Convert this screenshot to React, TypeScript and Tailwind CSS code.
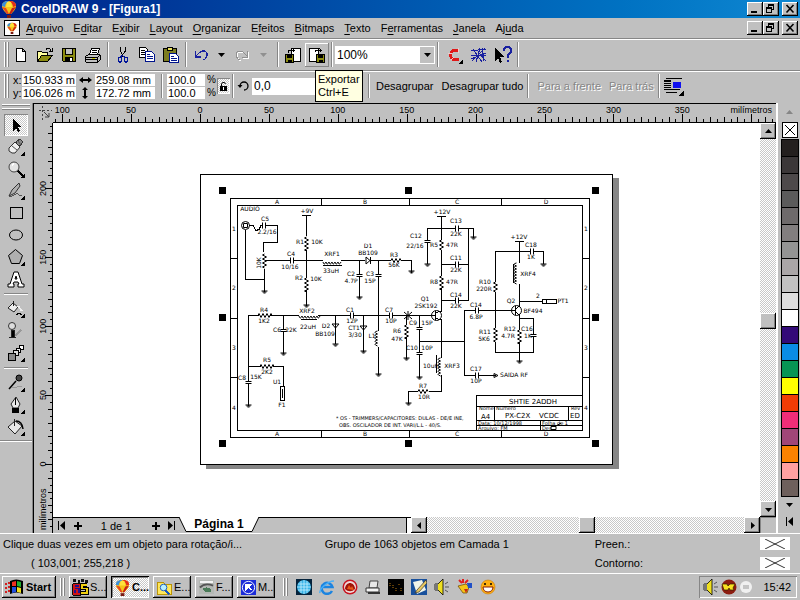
import type { ReactNode } from 'react';

const raised = 'bg-[#c0c0c0] shadow-[inset_-1px_-1px_#000,inset_1px_1px_#fff,inset_-2px_-2px_#808080]';
const dither = 'bg-[repeating-conic-gradient(#fff_0_25%,#c8c8c8_0_50%)] bg-[length:2px_2px]';

const menus = [
  ['', 'A', 'rquivo'],
  ['E', 'd', 'itar'],
  ['E', 'x', 'ibir'],
  ['', 'L', 'ayout'],
  ['', 'O', 'rganizar'],
  ['E', 'f', 'eitos'],
  ['', 'B', 'itmaps'],
  ['', 'T', 'exto'],
  ['F', 'e', 'rramentas'],
  ['', 'J', 'anela'],
  ['Aj', 'u', 'da'],
];

const palette = [
  'bg-[#231f1e]', 'bg-[#3b3738]', 'bg-[#4d494a]', 'bg-[#5b5b5b]', 'bg-[#6e6a6b]', 'bg-[#827e7f]', 'bg-[#949494]',
  'bg-[#aaa6a7]', 'bg-[#c2c2c2]', 'bg-[#dedede]', 'bg-white', 'bg-[#330a78]', 'bg-[#0a8ce6]', 'bg-[#069554]',
  'bg-[#ffff00]', 'bg-[#f03c05]', 'bg-[#f02d78]', 'bg-[#a04678]', 'bg-[#fa8200]', 'bg-[#ffa0a0]', 'bg-[#6e605c]',
];

function Icon({ children, size = 'size-[18px]' }: { children: ReactNode; size?: string }) {
  return (
    <svg viewBox="0 0 18 18" className={`${size} shrink-0`} fill="none" stroke="#000" shapeRendering="crispEdges" aria-hidden="true">
      {children}
    </svg>
  );
}

function Tri({ dir }: { dir: 'up' | 'down' | 'left' | 'right' }) {
  const d = {
    up: 'M1 6h7L4.500 2z',
    down: 'M1 3h7L4.500 7z',
    left: 'M6 1v7L2 4.500z',
    right: 'M3 1v7l4-3.500z',
  }[dir];
  return (
    <svg viewBox="0 0 9 9" className="size-[9px]" aria-hidden="true">
      <path d={d} fill="currentColor" />
    </svg>
  );
}

function Balloon({ size = 'size-[18px]' }: { size?: string }) {
  return (
    <svg viewBox="0 0 18 18" className={`${size} shrink-0`} aria-hidden="true">
      <path d="M9 1C4 1 2 3 2 6c0 3 3 6 5 8h4c2-2 5-5 5-8 0-3-2-5-7-5z" fill="#f5c518" />
      <path d="M9 1C4 1 2 3 2 6l3 1c0-3 2-5 4-6z" fill="#3a8fdc" />
      <path d="M9 1c5 0 7 2 7 5l-3 1c0-3-2-5-4-6z" fill="#e22b1c" />
      <path d="M7 2h4l1 5H6z" fill="#ffe23c" />
      <path d="M2 7l5 7h2L6 8z" fill="#e8461c" />
      <path d="M16 7l-5 7H9l3-6z" fill="#c81f14" />
      <path d="M7 15h4v3H7z" fill="#7a1a12" />
    </svg>
  );
}

function WindowButtons() {
  const base = `h-[14px] w-4 flex items-center justify-center ${raised}`;
  return (
    <div className="ml-auto flex pr-0.5">
      <button aria-label="Minimizar" className={base}>
        <svg viewBox="0 0 16 14" className="h-[14px] w-4" aria-hidden="true"><path d="M4 9h6v2H4z" /></svg>
      </button>
      <button aria-label="Restaurar" className={base}>
        <svg viewBox="0 0 16 14" className="h-[14px] w-4" fill="none" stroke="#000" shapeRendering="crispEdges" aria-hidden="true">
          <path d="M5.500 5V2.500h5v5H9M5 3.500h6M3.500 5.500h5v5h-5zM3 6.500h6" />
        </svg>
      </button>
      <button aria-label="Fechar" className={`${base} ml-[3px]`}>
        <svg viewBox="0 0 16 14" className="h-[14px] w-4" fill="none" stroke="#000" strokeWidth="1.600" aria-hidden="true">
          <path d="M4.500 3l7 7.500M11.500 3l-7 7.500" />
        </svg>
      </button>
    </div>
  );
}

function Grip({ className = 'px-1' }: { className?: string }) {
  return (
    <div className={`flex gap-px self-stretch py-0.5 ${className}`}>
      <div className="w-0.5 border-l border-white border-r border-r-[#868686]" />
      <div className="w-0.5 border-l border-white border-r border-r-[#868686]" />
    </div>
  );
}

function Sep() {
  return (
    <div className="flex w-1.5 shrink-0 justify-center self-stretch py-0.5">
      <div className="w-0.5 border-l border-[#868686] border-r border-r-white" />
    </div>
  );
}

function Tool({ label, children, className = 'w-6' }: { label: string; children: ReactNode; className?: string }) {
  return (
    <button aria-label={label} className={`flex h-6 shrink-0 items-center justify-center ${className}`}>
      {children}
    </button>
  );
}

function StandardBar() {
  return (
    <div className="flex h-8 items-center border-b border-[#868686] border-t border-t-white pb-px">
      <Grip className="pl-1" />
      <Tool label="Novo">
        <Icon><path d="M4.500 2.500h6l3 3v10h-9zM10.500 2.500v3h3" fill="#fff" /></Icon>
      </Tool>
      <Tool label="Abrir">
        <Icon>
          <path d="M1.500 15.500v-10h4l1 1h5v3" fill="#ffff9c" />
          <path d="M1.500 15.500l4-6h11l-5 6z" fill="#8c8c10" />
          <path d="M10 3.500c2-2 4-1 5 1M16.500 2v3.500H13" />
        </Icon>
      </Tool>
      <Tool label="Salvar">
        <Icon>
          <path d="M2.500 2.500h13v13h-12l-1-1z" fill="#8c8c10" />
          <path d="M5.500 2.500h7v6h-7z" fill="#c0c0c0" />
          <path d="M5 11h8v5H5z" fill="#000" stroke="none" />
          <path d="M10 12h2v3h-2z" fill="#fff" stroke="none" />
        </Icon>
      </Tool>
      <Tool label="Imprimir">
        <Icon>
          <path d="M5.500 8.500l2-6h8l-2 6z" fill="#fff" />
          <path d="M8 4.500h5M7.500 6.500h5" />
          <path d="M1.500 10.500l3-2h11l1 1v4l-3 3h-11l-1-1z" fill="#c0c0c0" />
          <path d="M2 11.500h11l3-2M13.500 11v5M2 13.500h11" />
          <path d="M8 12.500h3" stroke="#cc0" />
        </Icon>
      </Tool>
      <Sep />
      <Tool label="Recortar">
        <Icon>
          <path d="M6.500 1v4l2 4M11.500 1v4l-3 4v2" />
          <path d="M8.500 9l-2 2M9 10l2 1M4.500 12v3l1 1h1l1-1v-3l-1-1h-1zM10.500 12v3l1 1h1l1-1v-3l-1-1h-1z" stroke="#00149a" />
        </Icon>
      </Tool>
      <Tool label="Copiar">
        <Icon>
          <path d="M1.500 1.500h6l2 2v8h-8z" fill="#fff" />
          <path d="M3 4.500h4M3 6.500h5M3 8.500h4" />
          <path d="M7.500 5.500h6l3 3v7h-9z" fill="#fff" stroke="#00148c" />
          <path d="M9 8.500h3M9 10.500h6M9 12.500h6" stroke="#00148c" />
        </Icon>
      </Tool>
      <Tool label="Colar">
        <Icon>
          <path d="M1.500 2.500h13v13h-13z" fill="#7c7c20" />
          <path d="M5.500 1.500h5v3h-5z" fill="#e8e060" />
          <path d="M7.500 7.500h6l3 3v6h-9z" fill="#fff" stroke="#00148c" />
          <path d="M9 10.500h3M9 12.500h6M9 14.500h6" stroke="#00148c" />
        </Icon>
      </Tool>
      <Sep />
      <Tool label="Desfazer">
        <Icon>
          <path d="M3.500 5v6H9M4 10l4-4 3-1h2l2 2v3l-2 3-2 1" stroke="#1820a0" strokeWidth="1.300" />
        </Icon>
      </Tool>
      <Tool label="Lista de desfazer" className="w-4"><Tri dir="down" /></Tool>
      <Tool label="Refazer" className="w-[26px]">
        <Icon>
          <path d="M14.500 5v6H9M14 10l-4-4-3-1H5L3 7v3l2 3 2 1" stroke="#fff" transform="translate(1 1)" />
          <path d="M14.500 5v6H9M14 10l-4-4-3-1H5L3 7v3l2 3 2 1" stroke="#909090" />
        </Icon>
      </Tool>
      <Tool label="Lista de refazer" className="w-4 text-[#909090]"><Tri dir="down" /></Tool>
      <div className="w-1" />
      <Sep />
      <Tool label="Importar">
        <Icon>
          <path d="M7.500 2.500h9v13h-9z" fill="#fff" />
          <path d="M1.500 8.500h8v8h-8z" fill="#8c8c10" />
          <path d="M3 9h5v3H3zM4 14h4v3H4z" fill="#000" stroke="none" />
          <path d="M4.500 7V4.500h6M8.500 2.500l2 2-2 2" />
        </Icon>
      </Tool>
      <Tool label="Exportar" className="w-6 shadow-[inset_-1px_-1px_#868686,inset_1px_1px_#fff]">
        <Icon>
          <path d="M1.500 2.500h9v13h-9z" fill="#fff" />
          <path d="M8.500 8.500h8v8h-8z" fill="#8c8c10" />
          <path d="M10 9h5v3h-5zM11 14h4v3h-4z" fill="#000" stroke="none" />
          <path d="M7.500 6V4.500h6M11.500 2.500l2 2-2 2" />
        </Icon>
      </Tool>
      <Sep />
      <div className="relative h-[18px] w-[100px] shrink-0">
        <select aria-label="Níveis de zoom" className="block h-[18px] w-full appearance-none bg-white py-0 pl-0.5 text-[12px] leading-4 outline-none">
          <option>100%</option>
        </select>
        <div className="pointer-events-none absolute top-px right-px flex h-4 w-[14px] items-center justify-center bg-[#c0c0c0]">
          <Tri dir="down" />
        </div>
      </div>
      <Sep />
      <Tool label="Corel Online" className="w-[26px]">
        <Icon>
          <path d="M14 5l-3-1-4 1-2 4 2 4 4 1 3-1" stroke="#e01818" strokeWidth="3" />
          <path d="M13 2v5M3 7h4M6 14l3-3" stroke="#f4c8c8" />
          <path d="M18 13v5h-5z" fill="#000" stroke="none" />
        </Icon>
      </Tool>
      <Tool label="Gráficos">
        <Icon>
          <path d="M1 5l15-2M1 9l15 1M2 15L15 2M3 3l9 13M10 2L6 16M1 13l15-6M8 6l8 9M12 2l2 13" stroke="#1820a0" />
        </Icon>
      </Tool>
      <Tool label="O que é isto?">
        <Icon>
          <path d="M1 2v13l3-3 2 5 2-1-2-5h4z" fill="#000" stroke="none" />
          <path d="M10 5V3l2-2h3l2 2v3l-3 3v3M13 15h2" stroke="#1820a0" strokeWidth="1.700" />
        </Icon>
      </Tool>
      <Sep />
    </div>
  );
}

function Field({ label, value }: { label: string; value: string }) {
  return <input aria-label={label} defaultValue={value} className="h-3 w-full bg-white px-px text-[11px] leading-3 outline-none" />;
}

function PropertyBar() {
  return (
    <div className="flex h-[30px] shrink-0 items-center border-t border-white pb-px">
      <Grip />
      <div className="grid grid-cols-[9px_54px_19px_60px] gap-y-px text-[11px] leading-3">
        <span>x:</span>
        <Field label="Posição x" value="150.933 m" />
        <svg viewBox="0 0 19 12" className="h-3 w-[19px]" aria-hidden="true"><path d="M3 6l4-3v2h5V3l4 3-4 3V7H7v2z" /></svg>
        <Field label="Largura" value="259.08 mm" />
        <span>y:</span>
        <Field label="Posição y" value="106.026 m" />
        <svg viewBox="0 0 19 12" className="h-3 w-[19px]" aria-hidden="true"><path d="M9 0l3 3h-2v6h2l-3 3-3-3h2V3H6z" /></svg>
        <Field label="Altura" value="172.72 mm" />
      </div>
      <div className="w-1" />
      <Sep />
      <div className="ml-0.5 grid grid-cols-[38px_12px] gap-y-px text-[10px] leading-3">
        <Field label="Escala horizontal" value="100.0" />
        <span className="pl-0.5">%</span>
        <Field label="Escala vertical" value="100.0" />
        <span className="pl-0.5">%</span>
      </div>
      <button aria-label="Proporção fixa" className={`flex h-4 w-[13px] items-center justify-center shadow-[inset_1px_1px_#868686,inset_-1px_-1px_#fff] ${dither}`}>
        <svg viewBox="0 0 9 11" className="h-[11px] w-[9px]" fill="none" stroke="#000" aria-hidden="true">
          <path d="M2.500 5V3l1-1.500h2L6.500 3" />
          <path d="M1 5h7v5H1z" fill="#000" stroke="none" />
          <path d="M4 6h1v3H4z" fill="#fff" stroke="none" />
        </svg>
      </button>
      <Sep />
      <svg viewBox="0 0 16 16" className="size-4" fill="none" stroke="#000" strokeWidth="1.300" aria-hidden="true">
        <path d="M4 8a4 4 0 1 1 4 4" />
        <path d="M1.500 7h5L4 10z" fill="#000" stroke="none" />
      </svg>
      <input aria-label="Ângulo de rotação" defaultValue="0,0" className="h-[17px] w-[107px] bg-white px-0.5 text-[12px] outline-none" />
      <div className="w-[7px]" />
      <Sep />
      <button className="ml-1 whitespace-nowrap text-[11px]">Desagrupar</button>
      <button className="ml-2 whitespace-nowrap text-[11px]">Desagrupar tudo</button>
      <div className="w-0.5" />
      <Sep />
      <button disabled className="ml-1.5 whitespace-nowrap text-[11px] text-[#868686] [text-shadow:1px_1px_#fff]">Para a frente</button>
      <button disabled className="ml-2 whitespace-nowrap text-[11px] text-[#868686] [text-shadow:1px_1px_#fff]">Para trás</button>
      <div className="ml-0.5" />
      <Sep />
      <button aria-label="Quebra de texto" className="ml-0.5">
        <Icon size="size-5">
          <path d="M2 2.500h14M0 4.500h6M0 6.500h6M0 8.500h6M0 10.500h6M0 12.500h14M2 14.500h10" />
          <path d="M8 5h7v6H8z" fill="#1010f0" stroke="none" />
          <path d="M18 13v5h-5z" fill="#000" stroke="none" />
        </Icon>
      </button>
    </div>
  );
}

function ToolButton({ label, flyout, pressed, children }: { label: string; flyout?: boolean; pressed?: boolean; children: ReactNode }) {
  return (
    <button
      aria-label={label}
      className={`flex h-[22px] w-6 items-center justify-center ${pressed ? `shadow-[inset_1px_1px_#868686,inset_-1px_-1px_#fff] ${dither}` : ''}`}
    >
      <Icon>
        {children}
        {flyout && <path d="M18 13v5h-5z" fill="#000" stroke="none" />}
      </Icon>
    </button>
  );
}

function Toolbox() {
  return (
    <div className="w-[33px] shrink-0 border-r border-[#868686] pt-px">
      <div className="mx-0.5 mb-1 flex flex-col gap-0.5">
        <div className="h-0.5 border-t border-white border-b border-b-[#868686]" />
        <div className="h-0.5 border-t border-white border-b border-b-[#868686]" />
      </div>
      <div className="flex flex-col items-start pl-1">
        <ToolButton label="Seleção" pressed>
          <path d="M6 3v12l3-3 2 4 2-1-2-4h4z" fill="#000" stroke="none" />
        </ToolButton>
        <ToolButton label="Forma" flyout>
          <path d="M9 4l4-3 3 3-5 6z" fill="#888" stroke="#333" />
          <path d="M8 4L2 10v3l3 2h3l5-6z" fill="#f0f0f0" stroke="#333" shapeRendering="auto" />
          <path d="M11 3l3 4M5 8l5 4" stroke="#555" shapeRendering="auto" />
        </ToolButton>
        <ToolButton label="Zoom" flyout>
          <circle cx="7" cy="7" r="5" fill="#e4e4e4" stroke="#444" shapeRendering="auto" />
          <path d="M5 5l2-1" stroke="#fff" strokeWidth="2" />
          <path d="M11 11l5 5" strokeWidth="2.500" />
        </ToolButton>
        <ToolButton label="Mão livre" flyout>
          <path d="M12 1L5 8l-3 6 6-3 5-7z" fill="#b0b0b0" stroke="#333" shapeRendering="auto" />
          <path d="M2 14c4 2 7-4 9-2s3 2 4 2" stroke="#555" />
        </ToolButton>
        <ToolButton label="Retângulo"><path d="M3.500 3.500h12v11h-12z" /></ToolButton>
        <ToolButton label="Elipse"><ellipse cx="9" cy="9" rx="6.500" ry="5" shapeRendering="auto" /></ToolButton>
        <ToolButton label="Polígono" flyout><path d="M8.500 1.500l7 6-3 8h-8l-3-8z" fill="#b0b0b0" shapeRendering="auto" /></ToolButton>
        <ToolButton label="Texto">
          <path d="M7 2h4l4 12h2v3h-6v-3h1l-1-2H7l-1 2h1v3H1v-3h2zM8 9h2L9 6z" fill="#fff" shapeRendering="auto" />
        </ToolButton>
        <div className="my-[3px] h-0.5 w-6 border-t border-[#868686] border-b border-b-white" />
        <ToolButton label="Preenchimento interativo" flyout>
          <path d="M6 3l5 4-4 5-6-4z" fill="#eee" stroke="#222" shapeRendering="auto" />
          <path d="M6 1v5" stroke="#222" />
          <path d="M11 6l4 5" stroke="#eee" strokeWidth="2" />
          <path d="M9 15l3-2 3 2" />
        </ToolButton>
        <ToolButton label="Transparência interativa">
          <circle cx="5" cy="4" r="3.500" fill="#ddd" stroke="#333" shapeRendering="auto" />
          <path d="M4 8h3v7H4zM2 15.500h7" fill="#000" stroke="#222" />
          <path d="M8 14l6-6" stroke="#999" strokeWidth="2" />
        </ToolButton>
        <ToolButton label="Mistura interativa" flyout>
          <path d="M12.500 1.500h4v4h-4z" fill="#fff" />
          <path d="M9.500 4.500h4v4h-4z" fill="#eee" />
          <path d="M6.500 6.500h5v5h-5z" fill="#ddd" />
          <path d="M1.500 9.500h7v7h-7z" fill="#888" />
        </ToolButton>
        <div className="my-[3px] h-0.5 w-6 border-t border-[#868686] border-b border-b-white" />
        <ToolButton label="Conta-gotas" flyout>
          <path d="M5 14l10-2" stroke="#999" />
          <circle cx="12" cy="4" r="3" fill="#444" shapeRendering="auto" />
          <path d="M9 7l-7 8" strokeWidth="1.500" shapeRendering="auto" />
        </ToolButton>
        <ToolButton label="Contorno" flyout>
          <path d="M9 1l4 7-2 4H6L4 8z" fill="#e8e8e8" stroke="#222" shapeRendering="auto" />
          <path d="M8.500 2v7" />
          <path d="M5 12h7v5H5z" fill="#000" stroke="none" />
        </ToolButton>
        <ToolButton label="Preenchimento" flyout>
          <path d="M8 3l7 5-7 8-7-7z" fill="#e8e8e8" stroke="#222" shapeRendering="auto" />
          <path d="M7.500 1v7" stroke="#222" />
          <path d="M9 3q6 0 7 8" strokeWidth="1.500" shapeRendering="auto" />
        </ToolButton>
      </div>
      <div className="mt-0.5 h-0.5 border-t border-[#868686] border-b border-b-white" />
    </div>
  );
}

// 50 mm on the rulers spans just under 69 pixels
const MM = 1.378;
const tickLength = (mm: number) => (mm % 50 === 0 ? 8 : mm % 10 === 0 ? 5 : 3);
const range = (from: number, to: number, step: number) =>
  Array.from({ length: Math.floor((to - from) / step) + 1 }, (_, i) => from + i * step);

function HorizontalRuler() {
  return (
    <div className="h-[19px] min-w-0 flex-1 overflow-hidden border-b border-black">
      <svg className="h-[18px] w-full font-['Liberation_Sans',Arial,sans-serif] text-[9px]" shapeRendering="crispEdges" aria-hidden="true">
        {range(-105, 415, 5).map((mm) => {
          const x = Math.round(147 + mm * MM) + 0.5;
          return <path key={mm} d={`M${x} 18v-${tickLength(mm)}`} stroke="#000" />;
        })}
        {range(-100, 350, 50).map((mm) => (
          <text key={mm} x={147 + mm * MM} y="9" textAnchor="middle">{Math.abs(mm)}</text>
        ))}
        <text x="719" y="9" textAnchor="end">milímetros</text>
      </svg>
    </div>
  );
}

function VerticalRuler() {
  return (
    <div className="w-[17px] shrink-0 overflow-hidden border-r border-black">
      <svg className="h-full w-4 font-['Liberation_Sans',Arial,sans-serif] text-[9px]" shapeRendering="crispEdges" aria-hidden="true">
        {range(-45, 245, 5).map((mm) => {
          const y = Math.round(341 - mm * MM) + 0.5;
          return <path key={mm} d={`M16 ${y}h-${tickLength(mm) - 1}`} stroke="#000" />;
        })}
        {range(0, 200, 50).map((mm) => (
          <text key={mm} textAnchor="middle" transform={`translate(10 ${341 - mm * MM}) rotate(-90)`}>{mm}</text>
        ))}
        <text textAnchor="start" transform="translate(10 407) rotate(-90)">milímetros</text>
      </svg>
    </div>
  );
}

const zigH = (x: number, y: number, n = 5) => `M${x} ${y}l1 -2` + 'l2 4l2 -4'.repeat(Math.ceil(n / 2)) + 'l1 2';
const zigV = (x: number, y: number, n = 5) => `M${x} ${y}l-2 1` + 'l4 2l-4 2'.repeat(Math.ceil(n / 2)) + 'l2 1';
const capH = (x: number, y: number) => `M${x} ${y - 3}v6M${x + 3} ${y - 3}v6`;
const capV = (x: number, y: number) => `M${x - 3} ${y}h6M${x - 3} ${y + 2}h6`;
const ground = (x: number, y: number) => `M${x - 3} ${y}h6M${x - 2} ${y + 1}h4M${x - 1} ${y + 2}h2`;
const coilH = (x: number, y: number, n: number) => `M${x} ${y}` + 'q1 4 3 0'.repeat(n);
const coilV = (x: number, y: number, n: number) => `M${x} ${y}` + 'q-5 1 0 3'.repeat(n);

const wires = [
  'M230.500 198.500h359v239h-359zM237.500 205.500h345v225h-345z',
  'M321.500 198v7M409.500 198v7M501.500 198v7M321.500 430v7M409.500 430v7M501.500 430v7',
  'M230 258.500h7M230 318.500h7M230 377.500h7M582 258.500h7M582 318.500h7M582 377.500h7',
  // audio input
  'M249 225.500h4l3 5 3-1 2-4h2M265 225.500h12.500v16.500h-14v10M264.500 269v23M245.500 230v49.500h18M266 260.500h24M294 260.500h29',
  'M302 215.500h9M306.500 215v21M306.500 250v28M306.500 290v16M341 260.500h24M371 260.500h20M401 260.500h10v12',
  'M359.500 260v14M359.500 277v21M378.500 260v14M378.500 277v54M378.500 347v28',
  // oscillator row
  'M248.500 381v-65.500h10M270 315.500h29M318 315.500h32M353 315.500h37M393 315.500h39',
  'M248.500 383v23M248.500 366.500h12M273 366.500h10v20M280.500 386.500h4v14h-4zM282.500 389v9',
  'M283.500 315v14M283.500 332v22M335.500 315v29M363.500 315v37M406.500 315v10M406.500 337v22',
  'M419.500 315v12M419.500 330v22M419.500 355v23M419.500 341.500h45',
  // driver stage
  'M437 216.500h9M441.500 216v24M441.500 250v26M441.500 288v24M441.500 319v39M441.500 375v16.500h-13M418 391.500h-9.500V404',
  'M427.500 240v-11.500h28M459 228.500h14.500V238M427.500 243v21M441.500 264.500h14M459 264.500h9.500M441.500 300.500h14M459 300.500h9.500M468.500 228v72',
  'M435 311v9M432 315.500h3M435 313l6-2M435 318l6 2',
  // output stage
  'M464.500 310v65.500h11M464 310.500h11M479 310.500h36M479 375.500h17M495.500 282v-30.500h35M534 251.500h9.500V264M495.500 292v36M495.500 342v10.500h38V337M533.500 334v-15.500h-14',
  'M515 241.500h9M519.500 241v22M519.500 284v22M519.500 314v16M519.500 342v20M519 301.500h23M542.500 299.500h14v4h-14zM546 300v3M515.500 306v9M515 309l5-3M515 312l5 3',
  // title block
  'M476.500 430v-34.500h106M476.500 406.500h106M476.500 420.500h106M476.500 425.500h106M494.500 406v14M568.500 406v14M540.500 420v10',
];

const parts = [
  zigV(264.5, 254, 5), zigV(306.5, 237, 5), zigV(306.5, 278, 5), zigH(391, 260.5, 4), zigH(258, 315.5, 5), zigH(260, 366.5, 5),
  zigV(406.5, 325, 5), zigV(441.5, 240, 4), zigV(441.5, 276, 5), zigH(418, 391.5, 4), zigV(495.5, 282, 4), zigV(495.5, 328, 5), zigV(519.5, 330, 5),
  capH(262.5, 225.5), capH(290.5, 260.5), capV(359.5, 274.5), capV(378.5, 274.5), capV(283.5, 329.5), capH(350.5, 315.5), capH(389.5, 315.5),
  capV(248.5, 381.5), capV(419.5, 327.5), capV(419.5, 352.5), capV(427.5, 240.5), capH(455.5, 228.5), capH(455.5, 264.5), capH(455.5, 300.5),
  capH(475.5, 310.5), capH(475.5, 375.5), capH(530.5, 251.5), capV(533.5, 334.5),
  ground(264.5, 291), ground(306.5, 305), ground(359.5, 297), ground(378.5, 374), ground(248.5, 405), ground(283.5, 353), ground(335.5, 344),
  ground(363.5, 351), ground(406.5, 358), ground(419.5, 377), ground(408.5, 403), ground(411.5, 271), ground(427.5, 264), ground(473.5, 237),
  ground(543.5, 264), ground(519.5, 361),
  coilH(323, 262, 6), coilH(299, 316, 7), coilV(377.5, 331, 5), coilV(440.5, 358, 6), coilV(516.5, 263, 7),
  'M323 265.500h19M301 319.500h16M436.500 355v18M513.500 264v19', 'M366 257v7l4-3.500zM370.500 257v7', 'M332 324h7l-3.500 4zM360 326h7l-3.500 4z', 'M404 312l8 7M404 319l8-7M403 315.500h9M408 311v9',
];

const labels: [number, number, string][] = [
  [277, 204, 'A'], [365, 204, 'B'], [457, 204, 'C'], [546, 204, 'D'], [277, 436, 'A'], [365, 436, 'B'], [457, 436, 'C'], [546, 436, 'D'],
  [234, 231, '1'], [234, 290, '2'], [234, 350, '3'], [234, 410, '4'], [586, 231, '1'], [586, 290, '2'], [586, 350, '3'], [586, 410, '4'],
  [250, 211, 'AUDIO'], [265, 221, 'C5'], [267, 234, '2.2/16'], [307, 213, '+9V'], [300, 244, 'R1'], [317, 244, '10K'], [291, 256, 'C4'], [290, 269, '10/16'],
  [299, 280, 'R2'], [316, 281, '10K'], [332, 256, 'XRF1'], [331, 273, '33uH'], [368, 248, 'D1'], [368, 255, 'BB109'], [394, 257, 'R3'], [394, 267, '56K'],
  [351, 276, 'C2'], [351, 283, '4.7P'], [370, 276, 'C3'], [370, 283, '15P'], [264, 312, 'R4'], [264, 323, '1K2'], [307, 313, 'XRF2'], [308, 329, '22uH'],
  [326, 328, 'D2'], [325, 336, 'BB109'], [350, 312, 'C1'], [352, 323, '12P'], [354, 330, 'CT1'], [355, 337, '3/30'], [389, 312, 'C7'], [391, 323, '10P'],
  [277, 332, 'C6'], [291, 332, '22K'], [372, 338, 'L1'], [397, 333, 'R6'], [397, 341, '47K'], [267, 362, 'R5'], [267, 374, '2K2'], [242, 380, 'C8'],
  [256, 379, '15K'], [277, 384, 'U1'], [282, 407, 'F1'], [413, 325, 'C9'], [427, 325, '15P'], [412, 350, 'C10'], [427, 350, '10P'], [431, 368, '10uH'],
  [452, 368, 'XRF3'], [423, 388, 'R7'], [424, 399, '10R'], [442, 214, '+12V'], [416, 238, 'C12'], [415, 248, '22/16'], [434, 247, 'R5'], [452, 247, '47R'],
  [456, 223, 'C13'], [456, 236, '22K'], [456, 260, 'C11'], [456, 272, '22K'], [434, 284, 'R8'], [452, 284, '47R'], [456, 297, 'C14'], [456, 308, '22K'],
  [425, 301, 'Q1'], [426, 308, '2SK192'], [476, 307, 'C14'], [476, 319, '6.8P'], [476, 371, 'C17'], [476, 383, '10P'], [514, 377, 'SAIDA RF'],
  [485, 284, 'R10'], [484, 291, '220R'], [485, 334, 'R11'], [484, 341, '5K6'], [510, 331, 'R12'], [508, 338, '4.7R'], [527, 331, 'C16'], [528, 338, '1K'],
  [519, 239, '+12V'], [531, 247, 'C18'], [531, 259, '1K'], [528, 276, 'XRF4'], [511, 303, 'Q2'], [533, 313, 'BF494'], [538, 298, '2'], [563, 303, 'PT1'],
];

const smallPrint: [number, number, string][] = [
  [336, 420, '* OS - TRIMMERS/CAPACITORES: DULAS -    DE/E INE,'], [339, 427, 'OBS.  OSCILADOR DE INT. VARI/L.L   -   40/S.'],
  [479, 410, 'Nome'], [496, 410, 'Numero'], [571, 410, 'Rev'], [478, 425, 'Data: 10/12/1998'], [478, 430, 'Arquivo:   FM'], [542, 425, 'Folha  de  1'], [542, 430, 'Des.'],
];

function Schematic() {
  return (
    <svg viewBox="201 175 411 289" className="h-[289px] w-[411px] font-['DejaVu_Sans',sans-serif]" fill="none" stroke="#000" role="img" aria-label="Esquema do transmissor">
      <g shapeRendering="crispEdges">
        {wires.map((d) => <path key={d} d={d} />)}
        {[190, 317, 443].flatMap((y) =>
          [222, 408, 595].filter((x) => x !== 408 || y !== 317).map((x) => (
            <rect key={`${x}-${y}`} x={x - 3} y={y - 3} width="7" height="7" fill="#000" stroke="none" />
          )),
        )}
      </g>
      {parts.map((d, i) => <path key={i} d={d} />)}
      <circle cx="245.500" cy="225.500" r="4" />
      <path d="M243.500 223.500h4v4h-4z" />
      <circle cx="436.500" cy="315.500" r="5" />
      <circle cx="516.500" cy="310.500" r="5" />
      <path d="M551 426.500h5v3h-5zM556 426l5-3M494 373.500v4l4-2z" />
      <g fill="#000" stroke="none" fontSize="6" textAnchor="middle">
        {labels.map(([x, y, t], i) => <text key={i} x={x} y={y}>{t}</text>)}
        <text transform="translate(261 263) rotate(-90)">10K</text>
      </g>
      <g fill="#000" stroke="none" fontSize="5">
        {smallPrint.map(([x, y, t]) => <text key={t} x={x} y={y}>{t}</text>)}
      </g>
      <g fill="#000" stroke="none" fontSize="7">
        <text x="509" y="404">SHTIE 2ADDH</text>
        <text x="481" y="419">A4</text>
        <text x="505" y="418">PX-C2X</text>
        <text x="539" y="418">VCDC</text>
        <text x="570" y="418">ED</text>
      </g>
    </svg>
  );
}

function ScrollButton({ dir, label }: { dir: 'up' | 'down' | 'left' | 'right'; label: string }) {
  return (
    <button aria-label={label} className={`flex size-4 shrink-0 items-center justify-center ${raised}`}>
      <Tri dir={dir} />
    </button>
  );
}

function PageBar() {
  return (
    <div className="flex h-4 shrink-0">
      <div className="flex h-full flex-[354_1_0%] border-t border-black text-[11px]">
        <button aria-label="Primeira página" className="flex w-4 items-center justify-center">
          <svg viewBox="0 0 9 9" className="size-[9px]" aria-hidden="true"><path d="M1 0h1v9H1zM8 0v9L3 4.500z" /></svg>
        </button>
        <button aria-label="Adicionar página antes" className="flex w-4 items-center justify-center">
          <svg viewBox="0 0 9 9" className="size-[9px]" aria-hidden="true"><path d="M4 1h2v3h3v2H6v3H4V6H1V4h3z" /></svg>
        </button>
        <span className="w-[62px] text-center leading-4">1 de 1</span>
        <button aria-label="Adicionar página depois" className="flex w-4 items-center justify-center">
          <svg viewBox="0 0 9 9" className="size-[9px]" aria-hidden="true"><path d="M4 1h2v3h3v2H6v3H4V6H1V4h3z" /></svg>
        </button>
        <button aria-label="Última página" className="flex w-4 items-center justify-center">
          <svg viewBox="0 0 9 9" className="size-[9px]" aria-hidden="true"><path d="M7 0h1v9H7zM1 0v9l5-4.500z" /></svg>
        </button>
        <button className="relative -mt-px flex h-4 w-20 items-center justify-center pb-0.5 text-[12px] font-bold leading-none">
          <svg viewBox="0 0 80 16" className="absolute inset-0 h-4 w-20" aria-hidden="true">
            <path d="M0 0l7 14.500h66L80 0z" fill="#fff" />
            <path d="M0 0l7 14.500h66L80 0" fill="none" stroke="#000" />
          </svg>
          <span className="relative">Página 1</span>
        </button>
        <div className="ml-auto w-px bg-black" />
      </div>
      <div className="w-1 shrink-0 border-t border-black bg-white" />
      <div className={`flex flex-[349_1_0%] ${dither}`}>
        <ScrollButton dir="left" label="Rolar para a esquerda" />
        <div className="flex-[152_1_0%]" />
        <div className={`w-4 ${raised}`} />
        <div className="flex-[150_1_0%]" />
        <ScrollButton dir="right" label="Rolar para a direita" />
      </div>
      <div className="w-4 shrink-0 border-t border-l border-[#868686] bg-[#c0c0c0]" />
    </div>
  );
}

function Workspace() {
  return (
    <div className="flex min-w-0 flex-1 flex-col border-t border-l border-black">
      <div className="flex shrink-0 pl-0.5">
        <div className="flex h-[19px] w-[17px] items-center justify-center">
          <svg viewBox="0 0 14 16" className="h-4 w-[14px]" fill="none" stroke="#444" aria-hidden="true">
            <path d="M4.500 0v16M1 4.500h13" strokeDasharray="2 2" />
            <path d="M6 6l5 5M11 7v4H7" />
          </svg>
        </div>
        <HorizontalRuler />
      </div>
      <div className="flex min-h-0 flex-1 pl-0.5">
        <VerticalRuler />
        <div className="flex min-w-0 flex-1 flex-col">
          <div className="flex min-h-0 flex-1">
            <div className="relative min-w-0 flex-1 overflow-hidden bg-white">
              <div className="absolute top-[51px] left-[147px] border border-black bg-white shadow-[6px_4px_#868686]">
                <Schematic />
              </div>
            </div>
            <div className={`flex w-4 shrink-0 flex-col ${dither}`}>
              <ScrollButton dir="up" label="Rolar para cima" />
              <div className="flex-[173_1_0%]" />
              <div className={`h-4 ${raised}`} />
              <div className="flex-[172_1_0%]" />
              <ScrollButton dir="down" label="Rolar para baixo" />
            </div>
          </div>
          <PageBar />
        </div>
      </div>
    </div>
  );
}

function Palette() {
  return (
    <div className="flex w-6 shrink-0 flex-col items-center border-l-2 border-white pl-px">
      <button aria-label="Cores anteriores" className="flex h-[19px] items-center text-[#868686]"><Tri dir="up" /></button>
      <button aria-label="Sem cor" className="mb-px size-4 border border-black bg-white">
        <svg viewBox="0 0 14 14" className="size-[14px]" stroke="#000" aria-hidden="true"><path d="M2 2l10 10M12 2L2 12" /></svg>
      </button>
      <div className="flex flex-col border-t border-black">
        {palette.map((color, i) => (
          <button key={i} aria-label={`Cor ${i + 1}`} className={`h-[17px] w-[18px] border-x border-b border-black ${color}`} />
        ))}
      </div>
      <button aria-label="Próximas cores" className="flex h-[14px] items-center"><Tri dir="down" /></button>
      <button aria-label="Expandir paleta" className="mt-1.5 flex items-center">
        <svg viewBox="0 0 9 9" className="size-[9px]" aria-hidden="true"><path d="M1 0h1v9H1zM8 0v9L3 4.500z" /></svg>
      </button>
    </div>
  );
}

function EmptySwatch() {
  return (
    <div className="ml-auto flex h-[13px] w-[30px] items-center justify-center bg-white">
      <svg viewBox="0 0 20 10" className="h-2.5 w-5" fill="none" stroke="#000" strokeWidth="0.800" aria-hidden="true">
        <path d="M0 0l20 10M20 0L0 10" />
      </svg>
    </div>
  );
}

function StatusBar() {
  return (
    <div className="grid h-10 shrink-0 grid-cols-[323fr_271fr_196fr] grid-rows-2 items-center border-t border-white pr-2.5 pl-[3px] text-[11px] leading-4">
      <span className="whitespace-nowrap">Clique duas vezes em um objeto para rotação/i...</span>
      <span>Grupo de 1063 objetos em Camada 1</span>
      <div className="flex items-center">Preen.:<EmptySwatch /></div>
      <span className="pl-7">( 103,001; 255,218 )</span>
      <span />
      <div className="flex items-center">Contorno:<EmptySwatch /></div>
    </div>
  );
}

function TaskButton({ label, active, children }: { label: string; active?: boolean; children: ReactNode }) {
  return (
    <button
      className={`mr-1 flex h-[22px] w-[38px] shrink-0 items-center gap-px overflow-hidden pl-[3px] text-[11px] ${
        active ? `font-bold shadow-[inset_1px_1px_#000,inset_-1px_-1px_#fff,inset_2px_2px_#868686] ${dither}` : raised
      }`}
    >
      {children}
      <span>{label}</span>
    </button>
  );
}

function Launch({ label, children }: { label: string; children: ReactNode }) {
  return (
    <button aria-label={label} className="flex h-[22px] w-[23px] shrink-0 items-center justify-center">
      <svg viewBox="0 0 16 16" className="size-4" aria-hidden="true">{children}</svg>
    </button>
  );
}

function Speaker() {
  return (
    <>
      <path d="M1 5h3l5-5v16l-5-5H1z" fill="#f0e020" stroke="#000" strokeWidth="0.800" />
      <path d="M1 5h3v6H1z" fill="#777" />
      <path d="M11 5l3-2M11 8h4M11 11l3 2" stroke="#555" />
    </>
  );
}

function Taskbar() {
  return (
    <div className="flex h-[27px] shrink-0 items-center border-t border-white pl-0.5">
      <button className={`flex h-[22px] w-[54px] shrink-0 items-center gap-[3px] pl-[3px] text-[11px] font-bold ${raised}`}>
        <svg viewBox="0 0 18 16" className="h-4 w-[18px]" aria-hidden="true">
          <path d="M0 4h2v2H0zM0 8h2v2H0zM0 12h2v2H0zM3 3h2v2H3zM3 7h2v2H3zM3 11h2v2H3z" fill="#d02020" />
          <path d="M5 2q6-3 13 0v13q-7-3-13 0z" fill="#000" />
          <path d="M7 3l4-1v5H7z" fill="#f03020" />
          <path d="M12 2l4 1v5l-4-1z" fill="#20b030" />
          <path d="M7 8h4v5l-4 1z" fill="#2050e0" />
          <path d="M12 8l4 1v5l-4-1z" fill="#f0e020" />
        </svg>
        Start
      </button>
      <div className="flex h-[22px]"><Grip /></div>
      <TaskButton label="S...">
        <Icon size="size-[17px]">
          <path d="M1 0h3v3H1zM6 1h2v3H6zM10 0h3v3h-3zM14 1h3v3h-3z" fill="#111" stroke="none" />
          <path d="M1 5h8v12H1z" fill="#d01414" />
          <path d="M3 7h4M3 10h4v5M3 12v3" stroke="#201090" strokeWidth="2" />
          <path d="M16 6h-5v4h5v5h-6" stroke="#000" strokeWidth="4" />
          <path d="M16 6h-5v4h5v5h-6" stroke="#f0d010" strokeWidth="2" />
        </Icon>
      </TaskButton>
      <TaskButton label="C..." active><Balloon size="size-[17px]" /></TaskButton>
      <TaskButton label="E...">
        <Icon size="size-[17px]">
          <path d="M1.500 3.500h6l2 2h7v11h-15z" fill="#ffe75a" stroke="#b89000" />
          <circle cx="8" cy="9" r="3.500" fill="#b8f0ff" stroke="#1858c0" shapeRendering="auto" />
          <path d="M10 12l4 4" stroke="#1858c0" strokeWidth="2" />
        </Icon>
      </TaskButton>
      <TaskButton label="F...">
        <Icon size="size-[17px]">
          <path d="M1 1h16v15H1z" fill="#b4b8b4" stroke="none" />
          <path d="M2 3h14" stroke="#f4f4f4" strokeWidth="2" />
          <path d="M2 9c4-4 9-4 14-2" stroke="#555" strokeWidth="2" shapeRendering="auto" />
          <path d="M5 10c3-2 7-1 9 1v3H8z" fill="#4a7b58" stroke="none" />
        </Icon>
      </TaskButton>
      <TaskButton label="M...">
        <Icon size="size-[17px]">
          <path d="M1 1h16v16H1z" fill="#1c2cd8" stroke="none" />
          <circle cx="9" cy="9" r="6.500" stroke="#fff" shapeRendering="auto" />
          <path d="M6 6h5L6 11zM7 7l5 5" stroke="#fff" fill="#fff" strokeWidth="1.500" />
        </Icon>
      </TaskButton>
      <div className="flex h-[22px]"><Grip /></div>
      <Launch label="Área de trabalho">
        <path d="M0 0h16v16H0z" fill="#05233c" />
        <circle cx="8" cy="8" r="7" fill="#38b4e8" />
        <path d="M2 5h12M1 8h14M2 11h12M5 2v12M8 1v14M11 2v12" stroke="#c8f0ff" strokeWidth="0.800" />
      </Launch>
      <Launch label="Internet Explorer">
        <path d="M13 12a5.500 5.500 0 1 1 .5-4H4" fill="none" stroke="#1c84e0" strokeWidth="2.500" />
        <path d="M1 14C0 10 9 2 15 2" fill="none" stroke="#48b0f8" strokeWidth="1.500" />
      </Launch>
      <Launch label="Nero">
        <circle cx="8" cy="8" r="7.500" fill="#c81420" />
        <circle cx="8" cy="8" r="6" fill="#f0dada" />
        <path d="M3 10c0-4 3-6 5-6s5 2 5 6c-3 3-7 3-10 0z" fill="#a01408" />
        <path d="M5 10l2-4 2 3 1-2 2 4z" fill="#e85818" />
      </Launch>
      <Launch label="Scanner">
        <path d="M5 2h8l-1 7H4z" fill="#e8e8e8" stroke="#444" />
        <path d="M1 9h13v4H1z" fill="#f4f4f4" stroke="#333" />
        <path d="M3 13h12v2H3z" fill="#333" />
      </Launch>
      <Launch label="Winamp">
        <path d="M0 0h16v16H0z" />
        <path d="M2 4v4M5 6v3M8 9v3M11 5v2M13 9v3" stroke="#b87810" strokeDasharray="1 1" />
      </Launch>
      <Launch label="Bloco de desenho">
        <path d="M0 0h16v16H0z" fill="#18509c" />
        <path d="M2 3l9-2 4 10-9 4z" fill="#f0f4e8" />
        <path d="M15 1L6 11l-2 3 4-1 8-9z" fill="#e8c860" stroke="#333" strokeWidth="0.700" />
      </Launch>
      <Launch label="Volume"><Speaker /></Launch>
      <Launch label="Mensageiro">
        <path d="M1 7l8-2 3 3-2 6H6z" fill="#f4c418" stroke="#6a4400" strokeWidth="0.700" />
        <path d="M2 1l3 3M6 0v4M11 1L8 4" stroke="#e02020" strokeWidth="2" />
        <path d="M10 4h5v5h-4z" fill="#2050c8" />
        <path d="M7 10h4l-2 4z" fill="#c82818" />
      </Launch>
      <Launch label="Sorriso">
        <circle cx="8" cy="8" r="7" fill="#ffb010" stroke="#c87808" strokeWidth="0.600" />
        <path d="M3 8h10c0 3-2 5-5 5s-5-2-5-5z" fill="#fff" stroke="#8a2000" />
        <path d="M5 4v2M11 4v2" stroke="#000" strokeWidth="1.500" />
      </Launch>
      <div className="mr-[3px] ml-auto flex h-[22px] w-[98px] items-center pl-1 shadow-[inset_1px_1px_#868686,inset_-1px_-1px_#fff]">
        <svg viewBox="0 0 16 16" className="size-4" aria-hidden="true"><Speaker /></svg>
        <svg viewBox="0 0 16 16" className="ml-0.5 size-4" aria-hidden="true">
          <circle cx="8" cy="8" r="7.500" fill="#8c1c10" />
          <path d="M1 5h5l1 2 2-2h5l-2 4 1 2H9L8 9l-1 2H3z" fill="#f8e020" stroke="#302000" strokeWidth="0.700" />
        </svg>
        <svg viewBox="0 0 16 16" className="ml-px size-4" aria-hidden="true">
          <circle cx="8" cy="8" r="6" fill="#f0f0f0" />
          <path d="M5 7h6M5 9h6" stroke="#999" />
        </svg>
        <span className="ml-auto pr-1.5 text-[11px]">15:42</span>
      </div>
    </div>
  );
}

export default function App() {
  return (
    <div className="flex h-screen flex-col overflow-hidden bg-[#c0c0c0] font-['Liberation_Sans',Arial,sans-serif] text-black">
      <header className="flex h-[18px] shrink-0 items-center bg-linear-to-r from-[#02208a] to-[#1088d2] text-white">
        <Balloon />
        <h1 className="ml-[3px] text-[12px] font-bold leading-none">CorelDRAW 9 - [Figura1]</h1>
        <WindowButtons />
      </header>
      <nav className="flex h-[21px] shrink-0 items-center border-b border-[#868686] text-[11px]">
        <div className="mr-px ml-1 flex h-4 w-4 items-center justify-center border border-black bg-white"><Balloon size="size-3" /></div>
        {menus.map(([before, key, after]) => (
          <button key={before + key + after} className="px-[5px]">
            {before}<span className="underline underline-offset-2">{key}</span>{after}
          </button>
        ))}
        <WindowButtons />
      </nav>
      <StandardBar />
      <div className="relative">
        <PropertyBar />
        <div role="tooltip" className="absolute -top-px left-[315px] border border-black bg-[#ffffe1] px-0.5 py-0.5 text-[11px] leading-[13px]">
          Exportar
          <br />
          Ctrl+E
        </div>
      </div>
      <main className="mt-0.5 flex min-h-0 flex-1">
        <Toolbox />
        <Workspace />
        <Palette />
      </main>
      <StatusBar />
      <Taskbar />
    </div>
  );
}
